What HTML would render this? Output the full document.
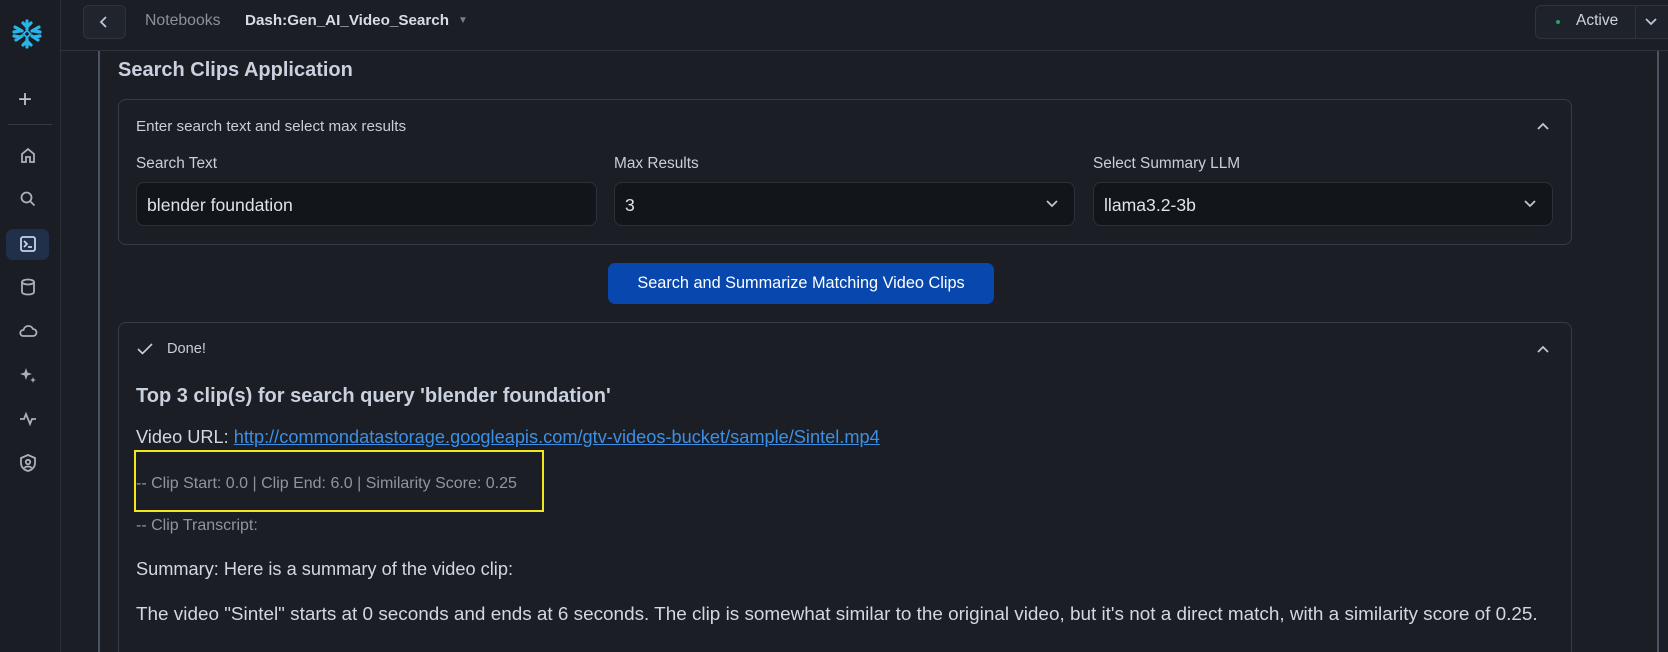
<!DOCTYPE html>
<html><head><meta charset="utf-8"><style>
*{box-sizing:border-box;margin:0;padding:0}
html{width:1668px;height:652px;overflow:hidden}
body{width:1668px;height:652px;background:#1b1e24;font-family:"Liberation Sans",sans-serif;color:#c9ced8;position:relative;overflow:hidden}
.a{position:absolute;white-space:nowrap}
.side{left:0;top:0;width:61px;height:652px;background:#1a1d23;border-right:1px solid #2b2f37}
.ic{position:absolute;left:18px;width:20px;height:20px}
.box{position:absolute;border:1px solid #363b46;border-radius:8px}
.inp{position:absolute;top:182px;height:44px;background:#12151a;border:1px solid #2b303a;border-radius:8px;font-size:17.6px;padding:12px 10px;color:#dfe3ea}
.lbl{top:155px;font-size:15.4px;color:#c9ced8}
svg{overflow:visible}
</style></head><body>
<div class="a side"></div>
<svg class="a" style="left:11px;top:18px" width="32" height="32" viewBox="0 0 32 32" fill="none" stroke="#29b5e8" stroke-width="3.2" stroke-linecap="round">
<path d="M16 3v8M12 5l4 4 4-4M16 29v-8M12 27l4-4 4 4M4 9l7 4M3 14l6-1M5 22l6-4M3 18l6 1M28 9l-7 4M29 14l-6-1M27 22l-6-4M29 18l-6 1"/>
<rect x="13.5" y="13.5" width="5" height="5" transform="rotate(45 16 16)" stroke-width="1.8"/></svg>
<div class="a" style="left:18px;top:86px;font-size:24px;color:#c0c5cf">+</div>
<div class="a" style="left:8px;top:124px;width:44px;height:1px;background:#333844"></div>
<svg class="ic" style="top:145px" viewBox="0 0 20 20" fill="none" stroke="#aab0bc" stroke-width="1.8"><path d="M4 17V9l6-5 6 5v8h-4v-5H8v5z"/></svg>
<svg class="ic" style="top:189px" viewBox="0 0 20 20" fill="none" stroke="#aab0bc" stroke-width="1.8"><circle cx="8.5" cy="8.5" r="5"/><path d="M12.5 12.5l4 4"/></svg>
<div class="a" style="left:6px;top:229px;width:43px;height:31px;background:#20304a;border-radius:7px"></div>
<svg class="ic" style="top:234px" viewBox="0 0 20 20" fill="none" stroke="#c8d3e6" stroke-width="1.8"><rect x="3" y="3" width="14" height="14" rx="2"/><path d="M6 7l3 3-3 3M10 13h4"/></svg>
<svg class="ic" style="top:277px" viewBox="0 0 20 20" fill="none" stroke="#aab0bc" stroke-width="1.8"><ellipse cx="10" cy="5" rx="6" ry="2.5"/><path d="M4 5v10c0 1.5 2.7 2.5 6 2.5s6-1 6-2.5V5"/></svg>
<svg class="ic" style="top:321px" viewBox="0 0 20 20" fill="none" stroke="#aab0bc" stroke-width="1.8"><path d="M5 15h10a3.5 3.5 0 0 0 0-7 5 5 0 0 0-9.5 1A3 3 0 0 0 5 15z"/></svg>
<svg class="ic" style="top:365px" viewBox="0 0 20 20" fill="#aab0bc"><path d="M8 3l1.5 4.5L14 9l-4.5 1.5L8 15l-1.5-4.5L2 9l4.5-1.5z"/><path d="M15 12l.8 2.2 2.2.8-2.2.8L15 18l-.8-2.2L12 15l2.2-.8z"/></svg>
<svg class="ic" style="top:409px" viewBox="0 0 20 20" fill="none" stroke="#aab0bc" stroke-width="1.8"><path d="M2 10h4l2-5 4 10 2-5h4"/></svg>
<svg class="ic" style="top:453px" viewBox="0 0 20 20" fill="none" stroke="#aab0bc" stroke-width="1.8"><path d="M10 2l7 3v5c0 4-3 7-7 8-4-1-7-4-7-8V5z"/><circle cx="10" cy="9" r="2.2"/><path d="M6.5 15c1-2 6-2 7 0"/></svg>
<div class="a" style="left:61px;top:50px;width:1607px;height:1px;background:#2e333d"></div>
<div class="a" style="left:83px;top:5px;width:43px;height:34px;background:#20242c;border:1px solid #2e333d;border-radius:6px"></div>
<svg class="a" style="left:99px;top:16px" width="10" height="12" viewBox="0 0 10 12" fill="none" stroke="#c0c5cf" stroke-width="1.8"><path d="M7 1L2 6l5 5"/></svg>
<div class="a" style="left:145px;top:12px;font-size:15.8px;color:#8b919d">Notebooks</div>
<div class="a" style="left:245px;top:12px;font-size:15.2px;color:#d8dce4;font-weight:bold">Dash:Gen_AI_Video_Search</div>
<div class="a" style="left:458px;top:15px;font-size:10px;color:#777d89">▼</div>
<div class="a" style="left:1535px;top:5px;width:140px;height:34px;background:#1e222a;border:1px solid #2e333d;border-radius:6px"></div>
<div class="a" style="left:1635px;top:5px;width:1px;height:34px;background:#2e333d"></div>
<div class="a" style="left:1556px;top:20px;width:4px;height:4px;border-radius:2px;background:#2e9e5b"></div>
<div class="a" style="left:1576px;top:12px;font-size:15.5px;color:#d0d4dc">Active</div>
<svg class="a" style="left:1645px;top:18px" width="12" height="8" viewBox="0 0 12 8" fill="none" stroke="#c0c5cf" stroke-width="1.8"><path d="M1 1l5 5 5-5"/></svg>
<div class="a" style="left:98px;top:51px;width:2px;height:601px;background:#4a5466"></div>
<div class="a" style="left:1657px;top:51px;width:2px;height:601px;background:#4a5466"></div>
<div class="a" style="left:118px;top:59px;font-size:20px;font-weight:bold;color:#c9d0de">Search Clips Application</div>
<div class="box" style="left:118px;top:99px;width:1454px;height:146px"></div>
<div class="a" style="left:136px;top:118px;font-size:15.2px;color:#c9ced8">Enter search text and select max results</div>
<svg class="a" style="left:1537px;top:122px" width="12" height="8" viewBox="0 0 12 8" fill="none" stroke="#c0c5cf" stroke-width="1.8"><path d="M1 7l5-5 5 5"/></svg>
<div class="a lbl" style="left:136px">Search Text</div>
<div class="a lbl" style="left:614px">Max Results</div>
<div class="a lbl" style="left:1093px">Select Summary LLM</div>
<div class="inp" style="left:136px;width:461px">blender foundation</div>
<div class="inp" style="left:614px;width:461px">3</div>
<div class="inp" style="left:1093px;width:460px">llama3.2-3b</div>
<svg class="a" style="left:1046px;top:200px" width="12" height="8" viewBox="0 0 12 8" fill="none" stroke="#c0c5cf" stroke-width="1.8"><path d="M1 1l5 5 5-5"/></svg>
<svg class="a" style="left:1524px;top:200px" width="12" height="8" viewBox="0 0 12 8" fill="none" stroke="#c0c5cf" stroke-width="1.8"><path d="M1 1l5 5 5-5"/></svg>
<div class="a" style="left:608px;top:263px;width:386px;height:41px;background:#0847ad;border-radius:7px;color:#fff;font-size:16.3px;text-align:center;line-height:41px">Search and Summarize Matching Video Clips</div>
<div class="box" style="left:118px;top:322px;width:1454px;height:340px"></div>
<svg class="a" style="left:137px;top:343px" width="16" height="12" viewBox="0 0 16 12" fill="none" stroke="#c9ced8" stroke-width="1.6"><path d="M1 6l4.5 4.5L15 1"/></svg>
<div class="a" style="left:167px;top:341px;font-size:14.6px;color:#c9ced8">Done!</div>
<svg class="a" style="left:1537px;top:345px" width="12" height="8" viewBox="0 0 12 8" fill="none" stroke="#c0c5cf" stroke-width="1.8"><path d="M1 7l5-5 5 5"/></svg>
<div class="a" style="left:136px;top:385px;font-size:20px;font-weight:bold;color:#c9d0de">Top 3 clip(s) for search query 'blender foundation'</div>
<div class="a" style="left:136px;top:427px;font-size:18.2px;color:#d3d7df">Video URL: <span style="color:#3d8fe6;text-decoration:underline">http://commondatastorage.googleapis.com/gtv-videos-bucket/sample/Sintel.mp4</span></div>
<div class="a" style="left:134px;top:450px;width:410px;height:62px;border:2px solid #f2e61d"></div>
<div class="a" style="left:136px;top:475px;font-size:16px;color:#8f959f">-- Clip Start: 0.0 | Clip End: 6.0 | Similarity Score: 0.25</div>
<div class="a" style="left:136px;top:517px;font-size:16px;color:#8f959f">-- Clip Transcript:</div>
<div class="a" style="left:136px;top:559px;font-size:18.2px;color:#d3d7df">Summary: Here is a summary of the video clip:</div>
<div class="a" style="left:136px;top:604px;font-size:18.9px;color:#d3d7df">The video "Sintel" starts at 0 seconds and ends at 6 seconds. The clip is somewhat similar to the original video, but it's not a direct match, with a similarity score of 0.25.</div>
</body></html>
